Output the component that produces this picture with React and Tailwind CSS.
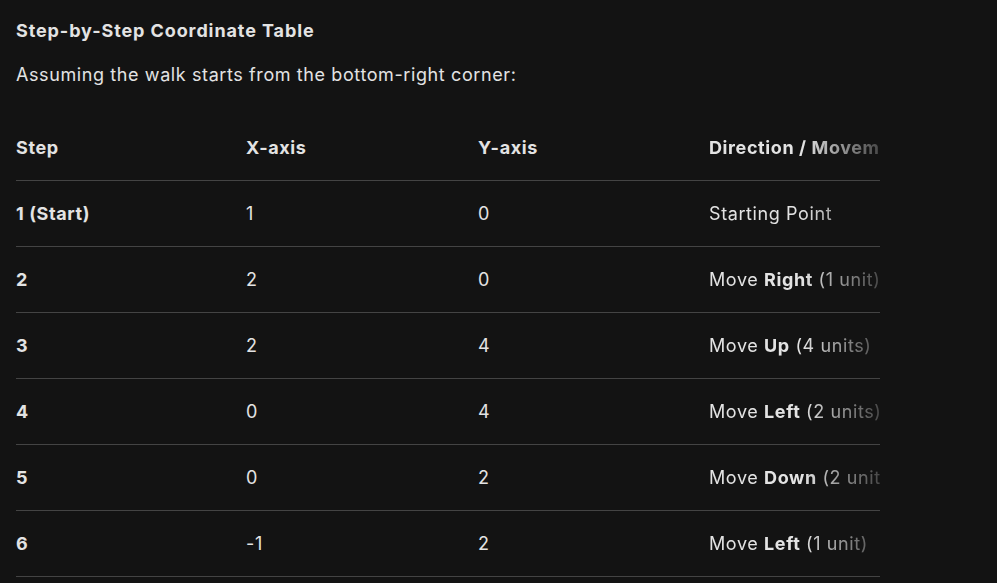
import React from "react";

const rows = [
  { step: "1 (Start)", x: "1", y: "0", dir: <>Starting Point</> },
  { step: "2", x: "2", y: "0", dir: <>Move <b className="font-bold">Right</b> (1 unit)</> },
  { step: "3", x: "2", y: "4", dir: <>Move <b className="font-bold">Up</b> (4 units)</> },
  { step: "4", x: "0", y: "4", dir: <>Move <b className="font-bold">Left</b> (2 units)</> },
  { step: "5", x: "0", y: "2", dir: <>Move <b className="font-bold">Down</b> (2 units)</> },
  { step: "6", x: "-1", y: "2", dir: <>Move <b className="font-bold">Left</b> (1 unit)</> },
];

const fade = "overflow-hidden whitespace-nowrap [mask-image:linear-gradient(to_right,black_55%,rgba(0,0,0,0.25)_100%)]";

const App = () => {
  return (
    <div className="min-h-screen w-full bg-[#131313] text-[#e3e3e3] font-['Inter',sans-serif] px-4 pt-[19px] overflow-hidden">
      {/* Heading */}
      <h3 className="text-[18px] leading-6 font-bold tracking-[0.9px]">Step-by-Step Coordinate Table</h3>
      <p className="mt-[18px] text-[18px] leading-7 tracking-[0.6px]">Assuming the walk starts from the bottom-right corner:</p>

      {/* Table */}
      <div className="mt-[26px] w-[864px] overflow-hidden text-[18px] tracking-[0.6px]">
        <div className="grid grid-cols-[230px_232px_231px_171px] h-[66px] items-center border-b border-[#444] font-bold">
          <div>Step</div>
          <div>X-axis</div>
          <div>Y-axis</div>
          <div className={fade}>Direction / Movement</div>
        </div>
        {rows.map((r) => (
          <div
            key={r.step}
            className="grid grid-cols-[230px_232px_231px_171px] h-[66px] items-center border-b border-[#444]"
          >
            <div className="font-bold">{r.step}</div>
            <div>{r.x}</div>
            <div>{r.y}</div>
            <div className={fade}>{r.dir}</div>
          </div>
        ))}
      </div>
    </div>
  );
};

export default App;
